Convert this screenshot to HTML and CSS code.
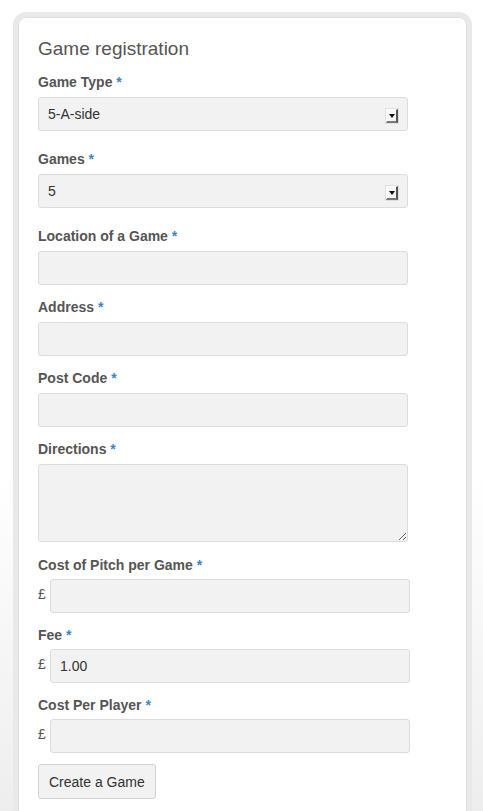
FILE: index.html
```html
<!DOCTYPE html>
<html lang="en">
<head>
<meta charset="utf-8">
<title>Game registration</title>
<link rel="stylesheet" href="styles.css">
</head>
<body>
<div class="card">
  <h2 class="title">Game registration</h2>
  <form class="form">
    <div class="field field-select">
      <label class="label">Game Type <span class="req">*</span></label>
      <div class="select-wrap">
        <select class="control select"><option>5-A-side</option></select>
        <span class="arrow"></span>
      </div>
    </div>
    <div class="field field-select">
      <label class="label">Games <span class="req">*</span></label>
      <div class="select-wrap">
        <select class="control select"><option>5</option></select>
        <span class="arrow"></span>
      </div>
    </div>
    <div class="field">
      <label class="label">Location of a Game <span class="req">*</span></label>
      <input class="control" type="text">
    </div>
    <div class="field">
      <label class="label">Address <span class="req">*</span></label>
      <input class="control" type="text">
    </div>
    <div class="field">
      <label class="label">Post Code <span class="req">*</span></label>
      <input class="control" type="text">
    </div>
    <div class="field field-area">
      <label class="label">Directions <span class="req">*</span></label>
      <textarea class="control textarea"></textarea>
    </div>
    <div class="field field-money">
      <label class="label">Cost of Pitch per Game <span class="req">*</span></label>
      <div class="money">
        <span class="currency">£</span>
        <input class="control money-input" type="text">
      </div>
    </div>
    <div class="field field-money">
      <label class="label">Fee <span class="req">*</span></label>
      <div class="money">
        <span class="currency">£</span>
        <input class="control money-input" type="text" value="1.00">
      </div>
    </div>
    <div class="field field-money">
      <label class="label">Cost Per Player <span class="req">*</span></label>
      <div class="money">
        <span class="currency">£</span>
        <input class="control money-input" type="text">
      </div>
    </div>
    <button class="btn" type="button">Create a Game</button>
  </form>
</div>
</body>
</html>
```
FILE: styles.css
```css
html, body {
  margin: 0;
  padding: 0;
}
body {
  min-height: 100vh;
  background: linear-gradient(to bottom, #ffffff 0%, #ffffff 55%, #ebebeb 100%);
  font-family: "Liberation Sans", Arial, Helvetica, sans-serif;
  color: #555;
  overflow: hidden;
}
.card {
  box-sizing: border-box;
  width: 459px;
  margin: 12px 0 0 13px;
  background: #fff;
  border: 5px solid #e9e9e9;
  border-radius: 13px;
  box-shadow: inset 0 0 0 1px #dedede;
  padding: 21px 20px 60px 20px;
}
.title {
  margin: 0;
  font-size: 19px;
  font-weight: normal;
  line-height: 22px;
  color: #555;
}
.form {
  display: flex;
  flex-direction: column;
  margin-top: 11px;
}
.field {
  display: flex;
  flex-direction: column;
  margin-bottom: 11px;
}
.field-select {
  margin-bottom: 17px;
}
.field-area {
  margin-bottom: 12px;
}
.label {
  font-size: 14px;
  font-weight: bold;
  line-height: 20px;
  color: #555;
  padding-top: 1px;
  margin-bottom: 5px;
}
.field-money .label {
  margin-bottom: 4px;
}
.req {
  color: #3b86c6;
}
.control {
  box-sizing: border-box;
  width: 370px;
  height: 34px;
  margin: 0;
  padding: 0 9px;
  background: #f2f2f2;
  border: 1px solid #dcdcdc;
  border-radius: 3px;
  font-family: "Liberation Sans", Arial, Helvetica, sans-serif;
  font-size: 14px;
  color: #333;
  outline: none;
}
.select-wrap {
  position: relative;
  width: 370px;
}
.select {
  -webkit-appearance: none;
  appearance: none;
  display: block;
}
.arrow {
  position: absolute;
  right: 10px;
  top: 12px;
  box-sizing: border-box;
  width: 12px;
  height: 14px;
  background: #f6f6f6;
  border-top: 1px solid #fff;
  border-left: 1px solid #fff;
  border-right: 2px solid #555;
  border-bottom: 2px solid #777;
  box-shadow: 0 0 0 1px #e0e0e0;
  pointer-events: none;
}
.arrow::after {
  content: "";
  position: absolute;
  left: 2px;
  top: 4px;
  border-left: 3px solid transparent;
  border-right: 3px solid transparent;
  border-top: 4px solid #111;
}
.textarea {
  height: 78px;
  padding: 8px 9px;
  resize: vertical;
  display: block;
}
.money {
  display: flex;
  align-items: center;
  gap: 4px;
}
.currency {
  width: 8px;
  font-size: 14px;
  color: #555;
  margin-top: -4px;
}
.money-input {
  width: 360px;
}
.btn {
  align-self: flex-start;
  height: 35px;
  padding: 0 10px;
  margin-top: 0;
  background: #f2f2f2;
  border: 1px solid #d2d2d2;
  border-radius: 3px;
  font-family: "Liberation Sans", Arial, Helvetica, sans-serif;
  font-size: 14px;
  color: #333;
}
```
